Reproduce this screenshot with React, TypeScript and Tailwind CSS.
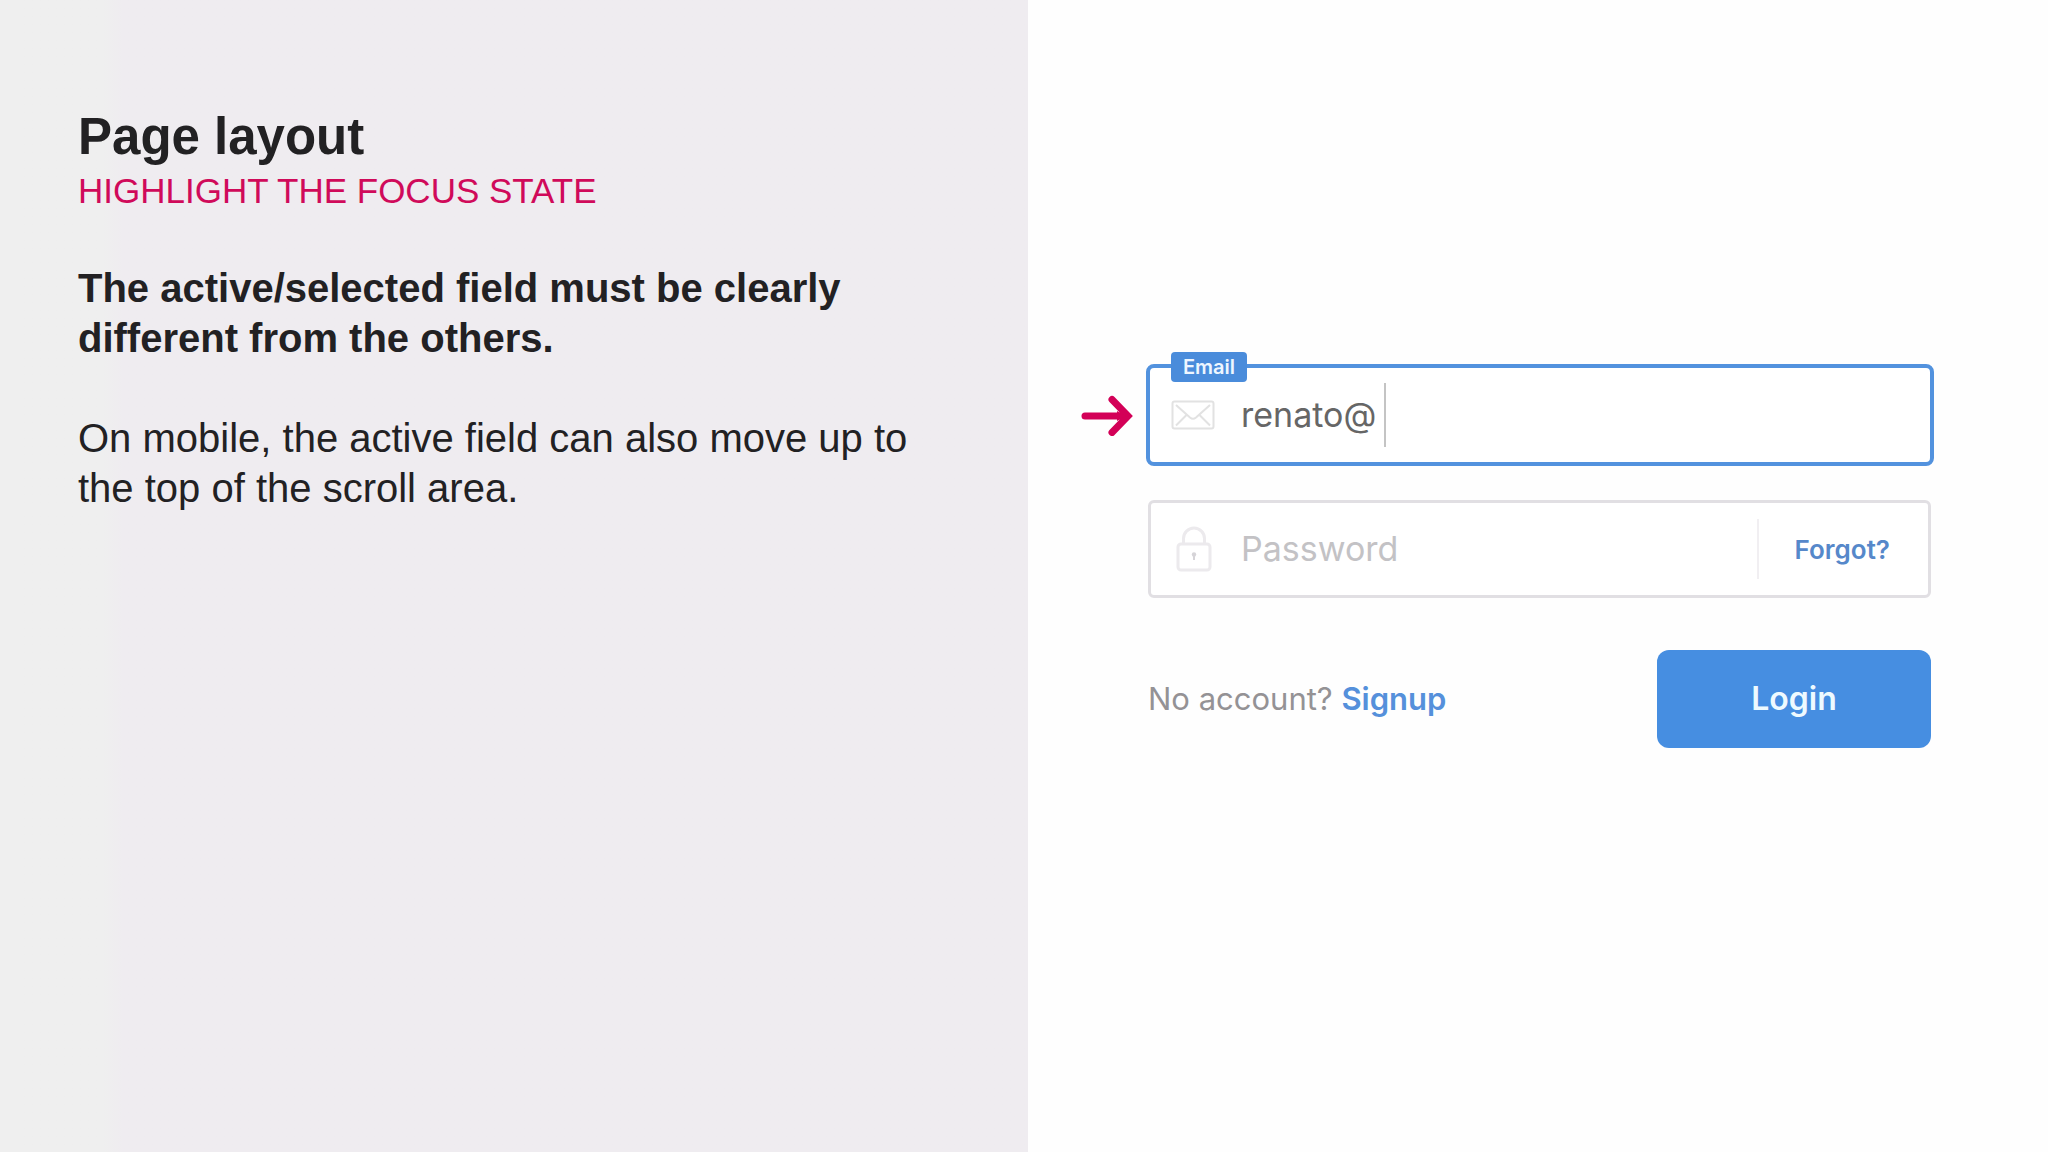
import { useState } from "react";

function ArrowIcon() {
  return (
    <svg viewBox="0 0 52 42" className="h-[42px] w-[52px] shrink-0" fill="none" stroke="#d30057" strokeWidth="7" strokeLinecap="round" strokeLinejoin="miter" aria-hidden="true">
      <path d="M4 22H44" />
      <path d="M31 5.500L47 22L31 38.500" />
      <path d="M36 17L45 22L36 27Z" fill="#d30057" stroke="none" />
    </svg>
  );
}

function EnvelopeIcon() {
  return (
    <svg viewBox="0 0 44 30" className="h-[30px] w-11 shrink-0" fill="none" stroke="#e2e2e2" strokeWidth="2" strokeLinejoin="round" aria-hidden="true">
      <rect x="1.500" y="1.500" width="41" height="27" rx="2" />
      <path d="M5 5L19 17.500Q22 20 25 17.500L39 5" />
      <path d="M5 25.500L15.500 15M39 25.500L28.500 15" />
    </svg>
  );
}

function LockIcon() {
  return (
    <svg viewBox="0 0 36 46" className="h-[46px] w-9 shrink-0" fill="none" stroke="#eceaed" strokeWidth="3" aria-hidden="true">
      <rect x="2" y="18" width="32" height="26" rx="3" />
      <path d="M7.500 18V12.500a10.500 10.500 0 0 1 21 0V18" />
      <circle cx="18" cy="28.500" r="2.200" fill="#d6d4d8" stroke="none" />
      <path d="M18 29V34" stroke="#d6d4d8" strokeWidth="2" />
    </svg>
  );
}

export default function App() {
  const [email, setEmail] = useState("renato@");
  const [password, setPassword] = useState("");

  return (
    <main className="grid min-h-screen grid-cols-[minmax(0,1028fr)_minmax(0,1020fr)] bg-[#fefefe] font-['Liberation_Sans',Arial,sans-serif]">
      <section className="bg-linear-to-r from-[#efefef] from-10% to-[#efecf0] to-12% px-[78px] pt-[107px] text-[#222123]">
        <h1 className="text-[51px] leading-[60px] font-bold">Page layout</h1>
        <p className="text-[35px] leading-[48px] text-[#d00a5a]">HIGHLIGHT THE FOCUS STATE</p>
        <div className="mt-[48px] max-w-[840px] space-y-[50px] text-[40px] leading-[50px]">
          <p className="font-bold">The active/selected field must be clearly different from the others.</p>
          <p>On mobile, the active field can also move up to the top of the scroll area.</p>
        </div>
      </section>

      <section className="pt-[364px] pr-[114px] pl-[53px] font-['Inter',sans-serif]">
        <form onSubmit={(e) => e.preventDefault()}>
          <div className="flex items-center gap-[13px]">
            <ArrowIcon />
            <div className="relative flex h-[102px] min-w-0 flex-1 items-center rounded-lg border-4 border-[#5292de] bg-white pl-[21px]">
              <label htmlFor="email" className="absolute -top-4 left-[21px] flex h-[30px] items-center rounded-sm bg-[#4a8cdb] px-3 text-[20px] font-semibold text-[#eef6ff]">
                Email
              </label>
              <EnvelopeIcon />
              <input
                id="email"
                type="text"
                value={email}
                onChange={(e) => setEmail(e.target.value)}
                className="ml-[26px] field-sizing-content bg-transparent text-[34px] leading-10 text-[#666666] outline-none"
              />
              <span className="ml-2 h-16 w-[2px] bg-[#c4c4c4]" />
            </div>
          </div>

          <div className="pr-[3px] pl-[67px]">
            <div className="mt-[34px] flex h-[98px] items-center rounded-md border-3 border-[#e1dfe3] bg-white pl-[25px]">
              <LockIcon />
              <input
                id="password"
                type="password"
                aria-label="Password"
                placeholder="Password"
                value={password}
                onChange={(e) => setPassword(e.target.value)}
                className="ml-[29px] min-w-0 flex-1 bg-transparent text-[34px] leading-10 text-[#666666] outline-none placeholder:text-[#c3c2c5]"
              />
              <a href="#forgot" className="flex h-[60px] items-center border-l-2 border-[#f1eff2] pr-[38px] pl-9 text-[26px] font-semibold text-[#5688ca]">
                Forgot?
              </a>
            </div>

            <div className="mt-[52px] flex items-center justify-between">
              <p className="text-[31px] leading-10 text-[#949295]">
                No account?{" "}
                <a href="#signup" className="font-semibold text-[#5590db]">
                  Signup
                </a>
              </p>
              <button type="submit" className="h-[98px] w-[274px] rounded-xl bg-[#468ee1] text-[32px] font-semibold text-[#eefaff]">
                Login
              </button>
            </div>
          </div>
        </form>
      </section>
    </main>
  );
}
